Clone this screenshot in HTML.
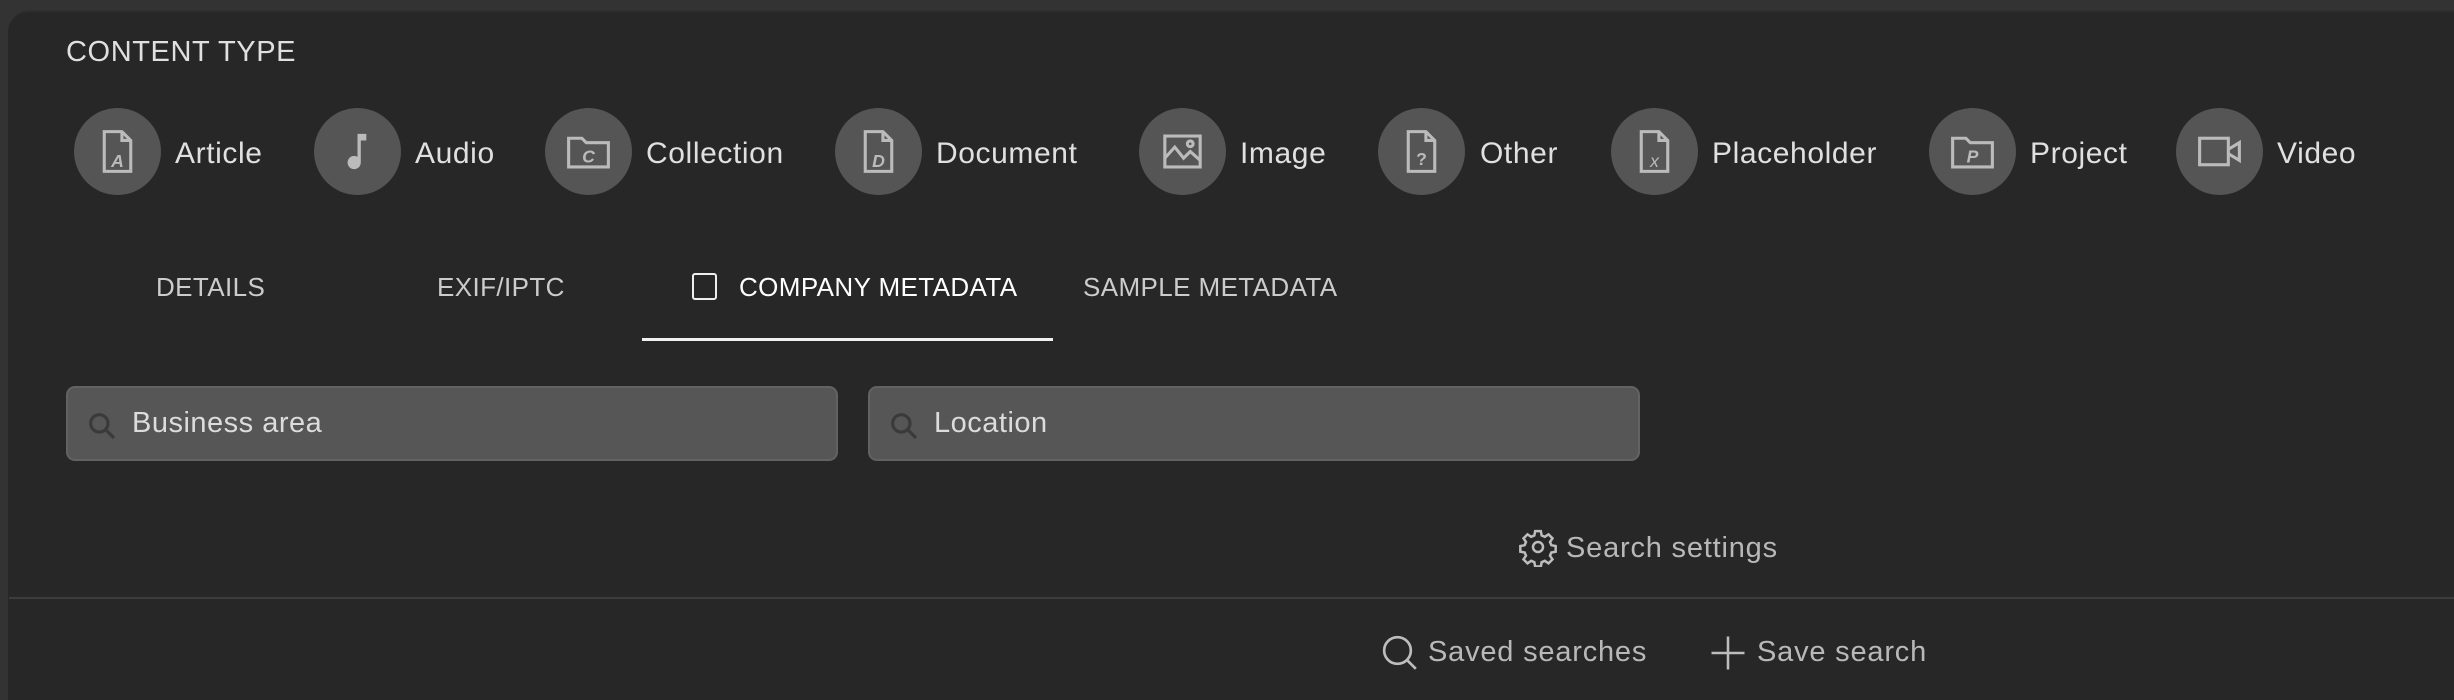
<!DOCTYPE html>
<html><head><meta charset="utf-8"><style>
*{margin:0;padding:0;box-sizing:border-box}
html,body{width:2454px;height:688px;overflow:hidden;background:#333;font-family:"Liberation Sans",sans-serif}
#panel{position:absolute;left:8px;top:10px;width:2460px;height:690px;background:#272727;border-radius:22px 0 0 0;border-top:2px solid #2e2e2e}
.a{position:absolute;white-space:nowrap}
.title{left:66px;top:36px;font-size:29px;color:#e0e0e0;letter-spacing:.6px}
.circ{position:absolute;top:108px;width:87px;height:87px;border-radius:50%;background:#555}
.circ svg{position:absolute;left:17px;top:17px;width:53px;height:53px}
.lbl{top:137px;font-size:30px;color:#e0e0e0;letter-spacing:.6px}
.tab{top:272px;font-size:26px;color:#cccccc;letter-spacing:.4px}
.inp{position:absolute;top:386px;width:772px;height:75px;background:#565656;border:2px solid #626262;border-radius:9px}
.inp svg{position:absolute;left:18px;top:22px;width:32px;height:32px}
.inp span{position:absolute;left:64px;top:19px;font-size:29px;color:#dcdcdc;letter-spacing:.5px}
.btm{font-size:29px;color:#b8b8b8;letter-spacing:.8px}
</style></head><body>
<div id="panel"></div>
<div class="a title">CONTENT TYPE</div>

<div class="circ" style="left:74px"><svg viewBox="0 0 24 24" fill="none" stroke="#bbb" stroke-width="1.4"><path d="M6 3h8l4 4v14H6z M14 3v4h4"/><text x="12" y="19" font-size="8" font-style="italic" font-weight="bold" fill="#bbb" stroke="none" text-anchor="middle" font-family="Liberation Sans">A</text></svg></div>
<div class="circ" style="left:314px"><svg viewBox="0 0 24 24"><path d="M12 4h4v3h-2.5v10a3 3 0 1 1-1.5-2.6z" fill="#bbb"/></svg></div>
<div class="circ" style="left:545px"><svg viewBox="0 0 24 24" fill="none" stroke="#bbb" stroke-width="1.4"><path d="M3 6h6l2 2h10v11H3z"/><text x="12" y="17" font-size="8" font-style="italic" font-weight="bold" fill="#bbb" stroke="none" text-anchor="middle" font-family="Liberation Sans">C</text></svg></div>
<div class="circ" style="left:835px"><svg viewBox="0 0 24 24" fill="none" stroke="#bbb" stroke-width="1.4"><path d="M6 3h8l4 4v14H6z M14 3v4h4"/><text x="12" y="19" font-size="8" font-style="italic" font-weight="bold" fill="#bbb" stroke="none" text-anchor="middle" font-family="Liberation Sans">D</text></svg></div>
<div class="circ" style="left:1139px"><svg viewBox="0 0 24 24" fill="none" stroke="#bbb" stroke-width="1.4"><rect x="4" y="5" width="16" height="14"/><path d="M4 15l4.5-5 4 5 3-3 4.5 4"/><circle cx="15.5" cy="8.5" r="1.3"/></svg></div>
<div class="circ" style="left:1378px"><svg viewBox="0 0 24 24" fill="none" stroke="#bbb" stroke-width="1.4"><path d="M6 3h8l4 4v14H6z M14 3v4h4"/><text x="12" y="18" font-size="8" font-weight="bold" fill="#bbb" stroke="none" text-anchor="middle" font-family="Liberation Sans">?</text></svg></div>
<div class="circ" style="left:1611px"><svg viewBox="0 0 24 24" fill="none" stroke="#bbb" stroke-width="1.4"><path d="M6 3h8l4 4v14H6z M14 3v4h4"/><text x="12" y="19" font-size="8" font-style="italic" fill="#bbb" stroke="none" text-anchor="middle" font-family="Liberation Sans">x</text></svg></div>
<div class="circ" style="left:1929px"><svg viewBox="0 0 24 24" fill="none" stroke="#bbb" stroke-width="1.4"><path d="M3 6h6l2 2h10v11H3z"/><text x="12" y="17" font-size="8" font-style="italic" font-weight="bold" fill="#bbb" stroke="none" text-anchor="middle" font-family="Liberation Sans">P</text></svg></div>
<div class="circ" style="left:2176px"><svg viewBox="0 0 24 24" fill="none" stroke="#bbb" stroke-width="1.4"><rect x="3" y="6" width="13" height="12"/><path d="M16 11l5-3v8l-5-3"/></svg></div>

<div class="a lbl" style="left:175px">Article</div>
<div class="a lbl" style="left:415px">Audio</div>
<div class="a lbl" style="left:646px">Collection</div>
<div class="a lbl" style="left:936px">Document</div>
<div class="a lbl" style="left:1240px">Image</div>
<div class="a lbl" style="left:1480px">Other</div>
<div class="a lbl" style="left:1712px">Placeholder</div>
<div class="a lbl" style="left:2030px">Project</div>
<div class="a lbl" style="left:2277px">Video</div>

<div class="a tab" style="left:156px">DETAILS</div>
<div class="a tab" style="left:437px">EXIF/IPTC</div>
<div class="a" style="left:692px;top:273px;width:25px;height:27px;border:2.5px solid #eee;border-radius:3px"></div>
<div class="a tab" style="left:739px;color:#fff">COMPANY METADATA</div>
<div class="a tab" style="left:1083px">SAMPLE METADATA</div>
<div class="a" style="left:642px;top:338px;width:411px;height:3px;background:#f0f0f0"></div>

<div class="inp" style="left:66px"><svg viewBox="0 0 24 24" fill="none" stroke="#3a3a3a" stroke-width="2.4"><circle cx="10" cy="10" r="6.5"/><path d="M15 15l6 6"/></svg><span>Business area</span></div>
<div class="inp" style="left:868px"><svg viewBox="0 0 24 24" fill="none" stroke="#3a3a3a" stroke-width="2.4"><circle cx="10" cy="10" r="6.5"/><path d="M15 15l6 6"/></svg><span>Location</span></div>

<svg class="a" style="left:1518px;top:527px" width="40" height="40" viewBox="0 0 24 24" fill="none" stroke="#bdbdbd" stroke-width="1.5"><path d="M10.3 2.5h3.4l.5 2.6 1.9.8 2.2-1.5 2.4 2.4-1.5 2.2.8 1.9 2.6.5v3.4l-2.6.5-.8 1.9 1.5 2.2-2.4 2.4-2.2-1.5-1.9.8-.5 2.6h-3.4l-.5-2.6-1.9-.8-2.2 1.5-2.4-2.4 1.5-2.2-.8-1.9-2.6-.5v-3.4l2.6-.5.8-1.9-1.5-2.2 2.4-2.4 2.2 1.5 1.9-.8z"/><circle cx="12" cy="12" r="3"/></svg>
<div class="a btm" style="left:1566px;top:532px">Search settings</div>

<div class="a" style="left:9px;top:597px;width:2445px;height:2px;background:#3d3d3d"></div>

<svg class="a" style="left:1380px;top:633px" width="40" height="40" viewBox="0 0 24 24" fill="none" stroke="#bdbdbd" stroke-width="1.6"><circle cx="10.5" cy="10.5" r="8"/><path d="M16.3 16.3l5.2 5.2"/></svg>
<div class="a btm" style="left:1428px;top:636px">Saved searches</div>
<svg class="a" style="left:1710px;top:635px" width="36" height="36" viewBox="0 0 24 24" stroke="#bdbdbd" stroke-width="1.7"><path d="M12 1v22M1 12h22"/></svg>
<div class="a btm" style="left:1757px;top:636px">Save search</div>
</body></html>
